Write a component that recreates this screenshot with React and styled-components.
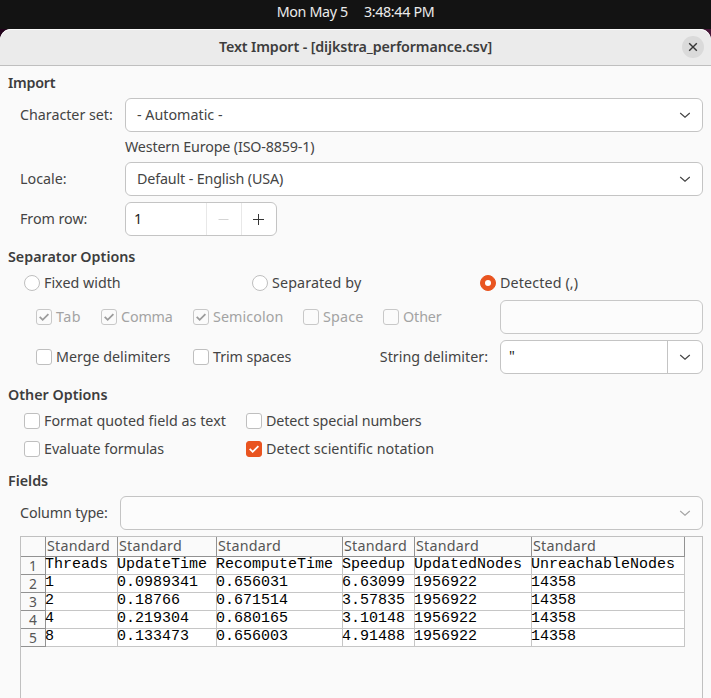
import React from "react";
import styled, { createGlobalStyle } from "styled-components";

const GlobalStyle = createGlobalStyle`
  *, *::before, *::after { box-sizing: border-box; }
  body {
    margin: 0;
    background: #2d0922;
    color: #444;
    font: 14.3px/20px "Noto Sans", "Open Sans", sans-serif;
    overflow: hidden;
  }
`;

const Desktop = styled.div`
  height: 698px;
  display: flex;
  flex-direction: column;
  overflow: hidden;
  white-space: nowrap;
  background: linear-gradient(90deg, #22031b 50%, #451637 50%);
`;

const TopBar = styled.header`
  height: 29px;
  flex: none;
  display: flex;
  justify-content: center;
  gap: 16px;
  padding-top: 2px;
  background: #131313;
  color: #ebebeb;
  letter-spacing: -0.35px;
`;

const Dialog = styled.main`
  flex: 1;
  min-height: 0;
  display: flex;
  flex-direction: column;
  border-radius: 11px 11px 0 0;
  overflow: hidden;
  background: #fafafa;
`;

const TitleBar = styled.div`
  height: 37px;
  flex: none;
  display: grid;
  grid-template-columns: 1fr auto 1fr;
  align-items: center;
  padding: 0 7px;
  background: #ebebeb;
  border-bottom: 1px solid #bfbfbf;
  box-shadow: inset 0 1px #fbfbfb;
  border-radius: 11px 11px 0 0;
`;

const Title = styled.h1`
  grid-column: 2;
  margin: 0;
  font-size: inherit;
  font-weight: 600;
  color: #3d3d3d;
  letter-spacing: -0.13px;
`;

const CloseButton = styled.button`
  justify-self: end;
  width: 22px;
  height: 22px;
  display: grid;
  place-items: center;
  padding: 0;
  border: 0;
  border-radius: 50%;
  background: #dadada;
  color: #353535;
`;

const Section = styled.section`
  padding: 0 8px;
  margin-top: ${(p) => p.$top}px;
`;

const Heading = styled.h2`
  margin: 0;
  height: 20px;
  font-size: inherit;
  font-weight: 600;
  color: #3d3d3d;
  letter-spacing: ${(p) => p.$track || 0}px;
`;

const FieldRow = styled.div`
  display: flex;
  align-items: center;
  height: 34px;
  margin-top: ${(p) => p.$top}px;
  padding-left: 12px;
`;

const Caption = styled.label`
  flex: none;
  width: ${(p) => p.$width}px;
  letter-spacing: ${(p) => p.$track || 0}px;
`;

const Hint = styled.div`
  height: 20px;
  margin-top: 5px;
  padding-left: 117px;
  letter-spacing: -0.16px;
`;

const Combo = styled.div`
  flex: 1;
  height: 34px;
  display: flex;
  align-items: center;
  justify-content: space-between;
  padding: 0 11px;
  border: 1px solid #c4c4c4;
  border-radius: 6px;
  letter-spacing: ${(p) => p.$track || 0}px;
  background: ${(p) => (p.$disabled ? "#fcfcfc" : "#fff")};
  color: ${(p) => (p.$disabled ? "#a5a5a5" : "#444")};
`;

const Spin = styled.div`
  width: 152px;
  height: 34px;
  display: grid;
  grid-template-columns: 80px 35px 35px;
  border: 1px solid #c4c4c4;
  border-radius: 6px;
  background: #fff;
`;

const SpinValue = styled.span`
  padding-left: 8px;
  line-height: 32px;
  color: #1c1c1c;
`;

const SpinButton = styled.span`
  display: grid;
  place-items: center;
  padding-right: 2px;
  border-left: 1px solid #e8e8e8;
  color: ${(p) => (p.$disabled ? "#d4d4d4" : "#353535")};
`;

const RadioRow = styled.div`
  display: grid;
  grid-template-columns: 228px 228px 1fr;
  align-items: center;
  height: 20px;
  margin-top: 6px;
  padding-left: 16px;
`;

const Option = styled.label`
  display: flex;
  align-items: center;
  gap: 4px;
  height: 20px;
  letter-spacing: ${(p) => p.$track || 0}px;
  color: ${(p) => (p.$disabled ? "#a3a3a3" : "#444")};
`;

const RadioDot = styled.span`
  width: 16px;
  height: 16px;
  display: grid;
  place-items: center;
  border-radius: 50%;
  border: 1px solid ${(p) => (p.$on ? "#e95420" : "#bfbfbf")};
  background: ${(p) => (p.$on ? "#e95420" : "#fff")};

  &::after {
    content: "";
    width: 6px;
    height: 6px;
    border-radius: 50%;
    background: #fff;
  }
`;

const CheckBox = styled.span`
  width: 16px;
  height: 16px;
  display: grid;
  place-items: center;
  border-radius: 3px;
  border: 1px solid ${(p) => (p.$on && !p.$disabled ? "#e95420" : p.$disabled ? "#c8c8c8" : "#bfbfbf")};
  background: ${(p) => (p.$disabled ? "#fbfbfb" : p.$on ? "#e95420" : "#fff")};
  color: ${(p) => (p.$disabled ? "#9c9c9c" : "#fff")};
`;

const SeparatorGrid = styled.div`
  display: grid;
  grid-template-columns: 65px 92px 110px 80px 117px 203px;
  grid-template-rows: 34px 34px;
  row-gap: 6px;
  align-items: center;
  margin-top: 7px;
  padding-left: 28px;
`;

const Wide = styled.div`
  grid-column: span 2;
`;

const DelimiterCaption = styled.label`
  grid-column: span 2;
  justify-self: end;
  padding-right: 12px;
`;

const Entry = styled.div`
  height: 34px;
  border: 1px solid #c8c8c8;
  border-radius: 6px;
  background: #fcfcfc;
`;

const EditCombo = styled.div`
  height: 34px;
  display: grid;
  grid-template-columns: 1fr 35px;
  border: 1px solid #c4c4c4;
  border-radius: 6px;
  background: #fff;
`;

const EditValue = styled.span`
  padding-left: 8px;
  line-height: 29px;
  color: #1c1c1c;
`;

const DropButton = styled.span`
  display: grid;
  place-items: center;
  border-left: 1px solid #c4c4c4;
`;

const OptionGrid = styled.div`
  display: grid;
  grid-template-columns: 222px 1fr;
  row-gap: 8px;
  margin-top: 6px;
  padding-left: 16px;
`;

const Preview = styled.div`
  height: 170px;
  margin: 6px 0 0 12px;
  border: 1px solid #c0c0c0;
  border-bottom: 0;
`;

const Table = styled.div`
  width: 664px;
  display: grid;
  grid-template-columns: 25px 72px 99px 126px 72px 117px 153px;
  grid-template-rows: 20px;
  grid-auto-rows: 18px;
`;

const HeadCell = styled.div`
  padding-left: 1px;
  line-height: 18px;
  letter-spacing: 0.24px;
  color: #565656;
  border-right: 1px solid #929292;
  border-bottom: 1px solid #929292;
`;

const RowNumber = styled.div`
  padding-right: 8px;
  text-align: right;
  line-height: 18px;
  font-size: 13.8px;
  color: #565656;
  border-right: 1px solid #929292;
  border-bottom: 1px solid #929292;
`;

const Cell = styled.div`
  padding-top: 1px;
  font: 15px/14px "Liberation Mono", monospace;
  text-indent: -1px;
  color: #000;
  background: #fff;
  border-right: 1px solid #c6c6c6;
  border-bottom: 1px solid #c6c6c6;
`;

const Chevron = () => (
  <svg width="12" height="8" viewBox="0 0 12 8" fill="none" stroke="currentColor" strokeWidth="1.2">
    <path d="M1.2 2 6 6.1 10.8 2" />
  </svg>
);

const Tick = () => (
  <svg width="12" height="12" viewBox="0 0 12 12" fill="none" stroke="currentColor" strokeWidth="1.8">
    <path d="M1.7 5.8 4.7 8.8 10.4 3.1" />
  </svg>
);

const Cross = () => (
  <svg width="10" height="10" viewBox="0 0 10 10" fill="none" stroke="currentColor" strokeWidth="1.4">
    <path d="M1.2 1.2 8.8 8.8M8.8 1.2 1.2 8.8" />
  </svg>
);

const Minus = () => (
  <svg width="11" height="11" viewBox="0 0 11 11" stroke="currentColor">
    <path d="M0.5 5.5H10.5" />
  </svg>
);

const Plus = () => (
  <svg width="11" height="11" viewBox="0 0 11 11" stroke="currentColor">
    <path d="M0 5.5H11M5.5 0V11" />
  </svg>
);

const Radio = ({ label, on, track }) => (
  <Option $track={track}>
    <RadioDot $on={on} />
    {label}
  </Option>
);

const Check = ({ label, on, disabled, track }) => (
  <Option $disabled={disabled} $track={track}>
    <CheckBox $on={on} $disabled={disabled}>{on && <Tick />}</CheckBox>
    {label}
  </Option>
);

const rows = [
  ["Threads", "UpdateTime", "RecomputeTime", "Speedup", "UpdatedNodes", "UnreachableNodes"],
  ["1", "0.0989341", "0.656031", "6.63099", "1956922", "14358"],
  ["2", "0.18766", "0.671514", "3.57835", "1956922", "14358"],
  ["4", "0.219304", "0.680165", "3.10148", "1956922", "14358"],
  ["8", "0.133473", "0.656003", "4.91488", "1956922", "14358"],
];

export default function App() {
  return (
    <Desktop>
      <GlobalStyle />
      <TopBar>
        <span>Mon May 5</span>
        <span>3:48:44 PM</span>
      </TopBar>
      <Dialog>
        <TitleBar>
          <Title>Text Import - [dijkstra_performance.csv]</Title>
          <CloseButton aria-label="Close"><Cross /></CloseButton>
        </TitleBar>

        <Section $top={7}>
          <Heading $track={-0.25}>Import</Heading>
          <FieldRow $top={5}>
            <Caption $width={105} $track={-0.03}>Character set:</Caption>
            <Combo>- Automatic -<Chevron /></Combo>
          </FieldRow>
          <Hint>Western Europe (ISO-8859-1)</Hint>
          <FieldRow $top={5}>
            <Caption $width={105}>Locale:</Caption>
            <Combo $track={-0.15}>Default - English (USA)<Chevron /></Combo>
          </FieldRow>
          <FieldRow $top={6}>
            <Caption $width={105} $track={-0.05}>From row:</Caption>
            <Spin>
              <SpinValue>1</SpinValue>
              <SpinButton $disabled><Minus /></SpinButton>
              <SpinButton><Plus /></SpinButton>
            </Spin>
          </FieldRow>
        </Section>

        <Section $top={11}>
          <Heading>Separator Options</Heading>
          <RadioRow>
            <Radio label="Fixed width" />
            <Radio label="Separated by" track={0.12} />
            <Radio label="Detected (,)" track={0.12} on />
          </RadioRow>
          <SeparatorGrid>
            <Check label="Tab" on disabled track={0.5} />
            <Check label="Comma" on disabled track={-0.15} />
            <Check label="Semicolon" on disabled track={0.1} />
            <Check label="Space" disabled track={0.2} />
            <Check label="Other" disabled track={-0.1} />
            <Entry />
            <Wide><Check label="Merge delimiters" track={-0.02} /></Wide>
            <Check label="Trim spaces" track={-0.1} />
            <DelimiterCaption>String delimiter:</DelimiterCaption>
            <EditCombo>
              <EditValue>"</EditValue>
              <DropButton><Chevron /></DropButton>
            </EditCombo>
          </SeparatorGrid>
        </Section>

        <Section $top={11}>
          <Heading>Other Options</Heading>
          <OptionGrid>
            <Check label="Format quoted field as text" track={0.02} />
            <Check label="Detect special numbers" track={-0.1} />
            <Check label="Evaluate formulas" track={-0.05} />
            <Check label="Detect scientific notation" track={0.05} on />
          </OptionGrid>
        </Section>

        <Section $top={12}>
          <Heading>Fields</Heading>
          <FieldRow $top={5}>
            <Caption $width={100} $track={-0.13}>Column type:</Caption>
            <Combo $disabled><span /><Chevron /></Combo>
          </FieldRow>
          <Preview>
            <Table>
              <HeadCell />
              {rows[0].map((name) => <HeadCell key={name}>Standard</HeadCell>)}
              {rows.map((row, i) => (
                <React.Fragment key={i}>
                  <RowNumber>{i + 1}</RowNumber>
                  {row.map((value, j) => <Cell key={j}>{value}</Cell>)}
                </React.Fragment>
              ))}
            </Table>
          </Preview>
        </Section>
      </Dialog>
    </Desktop>
  );
}
